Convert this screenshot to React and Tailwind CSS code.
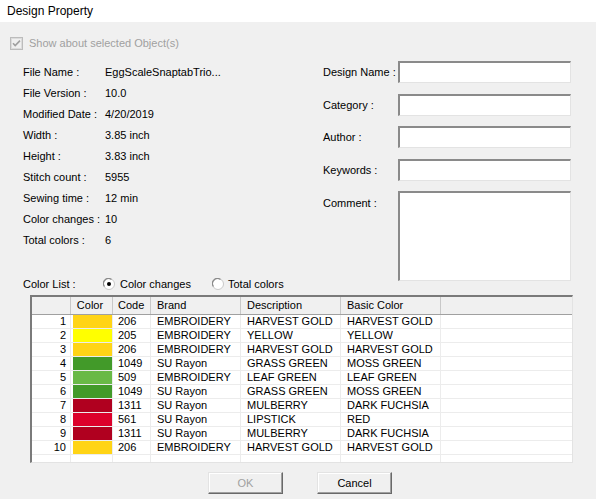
const ROWS = [
    { n: 1, color: "#ffd416", code: "206", brand: "EMBROIDERY", desc: "HARVEST GOLD", basic: "HARVEST GOLD" },
    { n: 2, color: "#ffff00", code: "205", brand: "EMBROIDERY", desc: "YELLOW", basic: "YELLOW" },
    { n: 3, color: "#ffd416", code: "206", brand: "EMBROIDERY", desc: "HARVEST GOLD", basic: "HARVEST GOLD" },
    { n: 4, color: "#429a29", code: "1049", brand: "SU Rayon", desc: "GRASS GREEN", basic: "MOSS GREEN" },
    { n: 5, color: "#69b946", code: "509", brand: "EMBROIDERY", desc: "LEAF GREEN", basic: "LEAF GREEN" },
    { n: 6, color: "#429a29", code: "1049", brand: "SU Rayon", desc: "GRASS GREEN", basic: "MOSS GREEN" },
    { n: 7, color: "#b0001f", code: "1311", brand: "SU Rayon", desc: "MULBERRY", basic: "DARK FUCHSIA" },
    { n: 8, color: "#dc002b", code: "561", brand: "SU Rayon", desc: "LIPSTICK", basic: "RED" },
    { n: 9, color: "#b0001f", code: "1311", brand: "SU Rayon", desc: "MULBERRY", basic: "DARK FUCHSIA" },
    { n: 10, color: "#ffd416", code: "206", brand: "EMBROIDERY", desc: "HARVEST GOLD", basic: "HARVEST GOLD" },
];

const INFO = [
    ["File Name :", "EggScaleSnaptabTrio..."],
    ["File Version :", "10.0"],
    ["Modified Date :", "4/20/2019"],
    ["Width :", "3.85 inch"],
    ["Height :", "3.83 inch"],
    ["Stitch count :", "5955"],
    ["Sewing time :", "12 min"],
    ["Color changes :", "10"],
    ["Total colors :", "6"],
];

const COLS = "grid grid-cols-[39px_42px_38px_90px_100px_100px_1fr]";
const sunken = "border-t-2 border-l-2 border-t-[#8a8a8a] border-l-[#8a8a8a] border-r border-b border-r-[#e3e3e3] border-b-[#e3e3e3] bg-white";

function Radio({ checked }) {
    return (
        <svg width="12" height="12" viewBox="0 0 12 12">
            <circle cx="6" cy="6" r="5.5" fill="#fff" stroke="#c8c8c8" />
            <path d="M1.5 8.5 A5 5 0 0 1 8.5 1.5" fill="none" stroke="#8a8a8a" strokeWidth="1.2" />
            {checked && <circle cx="6" cy="6" r="2" fill="#000" />}
        </svg>
    );
}

function Field({ label, className = "", tall }) {
    return (
        <div className={`flex ${tall ? "items-start" : "items-center"} ${className}`}>
            <div className={`w-[75px] ${tall ? "pt-[4px]" : ""}`}>{label}</div>
            <div className={`w-[173px] ${tall ? "h-[90px]" : "h-[22px]"} ${sunken}`} />
        </div>
    );
}

export default function App() {
    return (
        <div className="w-[596px] h-[499px] bg-[#f0f0f0] flex flex-col overflow-hidden text-[11px] text-black font-['Liberation_Sans',Arial,sans-serif]">
            <div className="h-[22px] bg-white flex items-center pl-[7px] text-[12px]">Design Property</div>

            <div className="mt-[13px] h-4 flex items-center pl-[10px] gap-[6px] text-[#a0a0a0]">
                <svg width="13" height="13" viewBox="0 0 13 13">
                    <rect x="0.5" y="0.5" width="12" height="12" fill="#f0f0f0" stroke="#bcbcbc" />
                    <rect x="1.5" y="1.5" width="10" height="10" fill="none" stroke="#dcdcdc" />
                    <path d="M3 6.2 L5.2 8.6 L10 3.6" fill="none" stroke="#a0a0a0" strokeWidth="1.6" />
                </svg>
                <span>Show about selected Object(s)</span>
            </div>

            <div className="flex">
                <div className="w-[323px] pl-[23px] pt-[11px]">
                    {INFO.map(([k, v]) => (
                        <div key={k} className="h-[21px] flex items-center">
                            <div className="w-[82px]">{k}</div>
                            <div>{v}</div>
                        </div>
                    ))}
                </div>
                <div className="pt-[10px]">
                    <Field label="Design Name :" />
                    <Field label="Category :" className="mt-[11px]" />
                    <Field label="Author :" className="mt-[10px]" />
                    <Field label="Keywords :" className="mt-[11px]" />
                    <Field label="Comment :" className="mt-[10px]" tall />
                </div>
            </div>

            <div className="-mt-[4px] h-[14px] flex items-center pl-[23px]">
                <div className="w-[80px]">Color List :</div>
                <Radio checked />
                <span className="ml-[5px] w-[92px]">Color changes</span>
                <Radio />
                <span className="ml-[4px]">Total colors</span>
            </div>

            <div className="mt-[4px] ml-[30px] w-[543px] h-[168px] border-t-2 border-l-2 border-t-[#7a7a7a] border-l-[#7a7a7a] border-r border-b border-r-[#e3e3e3] border-b-[#e3e3e3] bg-white flex flex-col overflow-hidden">
                <div className={`${COLS} h-[18px] bg-[#f0f0f0] border-b border-b-[#a0a0a0]`}>
                    <div className="border-r border-r-[#c8c8c8]" />
                    <div className="border-r border-r-[#c8c8c8] flex items-center justify-center pr-[3px]">Color</div>
                    <div className="border-r border-r-[#c8c8c8] flex items-center pl-[5px]">Code</div>
                    <div className="border-r border-r-[#c8c8c8] flex items-center pl-[6px]">Brand</div>
                    <div className="border-r border-r-[#c8c8c8] flex items-center pl-[6px]">Description</div>
                    <div className="border-r border-r-[#c8c8c8] flex items-center pl-[6px]">Basic Color</div>
                    <div />
                </div>
                {ROWS.map((r) => (
                    <div key={r.n} className={`${COLS} h-[14px] border-b border-b-[#ececec] leading-[13px]`}>
                        <div className="border-r border-r-[#ececec] text-right pr-[4px]">{r.n}</div>
                        <div className="border-r border-r-[#ececec] pl-[2px]">
                            <div className="h-[13px]" style={{ backgroundColor: r.color }} />
                        </div>
                        <div className="border-r border-r-[#ececec] pl-[5px]">{r.code}</div>
                        <div className="border-r border-r-[#ececec] pl-[6px]">{r.brand}</div>
                        <div className="border-r border-r-[#ececec] pl-[6px]">{r.desc}</div>
                        <div className="border-r border-r-[#ececec] pl-[6px]">{r.basic}</div>
                        <div />
                    </div>
                ))}
                <div className={`${COLS} flex-1`}>
                    <div className="border-r border-r-[#ececec]" />
                    <div className="border-r border-r-[#ececec]" />
                    <div className="border-r border-r-[#ececec]" />
                    <div className="border-r border-r-[#ececec]" />
                    <div className="border-r border-r-[#ececec]" />
                    <div className="border-r border-r-[#ececec]" />
                    <div />
                </div>
            </div>

            <div className="mt-[9px] flex">
                <button className="ml-[208px] w-[75px] h-[22px] bg-[#f0f0f0] border border-t-[#e3e3e3] border-l-[#e3e3e3] border-r-[#696969] border-b-[#696969] shadow-[inset_-1px_-1px_0_#a0a0a0,inset_1px_1px_0_#fff] text-[#a0a0a0] text-[11px]">
                    OK
                </button>
                <button className="ml-[34px] w-[75px] h-[22px] bg-[#f0f0f0] border border-t-[#e3e3e3] border-l-[#e3e3e3] border-r-[#696969] border-b-[#696969] shadow-[inset_-1px_-1px_0_#a0a0a0,inset_1px_1px_0_#fff] text-black text-[11px]">
                    Cancel
                </button>
            </div>
        </div>
    );
}
